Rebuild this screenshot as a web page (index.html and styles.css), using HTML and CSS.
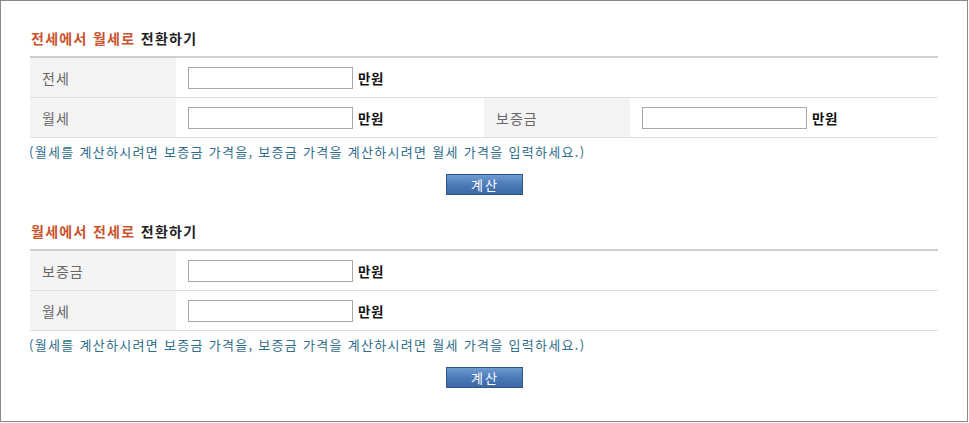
FILE: index.html
```html
<!DOCTYPE html>
<html lang="ko">
<head>
<meta charset="utf-8">
<title>전월세 전환</title>
<link rel="stylesheet" href="styles.css">
</head>
<body>
<div class="frame">
  <section class="calc">
    <h2 class="title"><span class="hl">전세에서 월세로</span> 전환하기</h2>
    <div class="table">
      <div class="row">
        <div class="label">전세</div>
        <div class="value wide"><input class="field" type="text"><span class="unit">만원</span></div>
      </div>
      <div class="row">
        <div class="label">월세</div>
        <div class="value"><input class="field" type="text"><span class="unit">만원</span></div>
        <div class="label">보증금</div>
        <div class="value"><input class="field" type="text"><span class="unit">만원</span></div>
      </div>
    </div>
    <p class="note">(월세를 계산하시려면 보증금 가격을, 보증금 가격을 계산하시려면 월세 가격을 입력하세요.)</p>
    <div class="actions"><button class="btn" type="button">계산</button></div>
  </section>

  <section class="calc second">
    <h2 class="title"><span class="hl">월세에서 전세로</span> 전환하기</h2>
    <div class="table">
      <div class="row">
        <div class="label">보증금</div>
        <div class="value wide"><input class="field" type="text"><span class="unit">만원</span></div>
      </div>
      <div class="row">
        <div class="label">월세</div>
        <div class="value wide"><input class="field" type="text"><span class="unit">만원</span></div>
      </div>
    </div>
    <p class="note">(월세를 계산하시려면 보증금 가격을, 보증금 가격을 계산하시려면 월세 가격을 입력하세요.)</p>
    <div class="actions"><button class="btn" type="button">계산</button></div>
  </section>
</div>
</body>
</html>
```

FILE: styles.css
```css
html, body {
  margin: 0;
  padding: 0;
  background: #fff;
}
body {
  font-family: "Noto Sans CJK KR", "Noto Sans", sans-serif;
}
.frame {
  box-sizing: border-box;
  width: 968px;
  height: 422px;
  border: 1px solid #8a8a8a;
  padding: 27px 0 0 29px;
}
.calc {
  width: 908px;
}
.second {
  margin-top: 26px;
}
.title {
  margin: 0 0 8px 1px;
  font-size: 14px;
  line-height: 20px;
  font-weight: bold;
  color: #222;
  letter-spacing: 1.3px;
}
.hl {
  color: #c8532c;
}
.table {
  border-top: 2px solid #cfcfcf;
}
.row {
  display: grid;
  grid-template-columns: 146px 308px 146px 308px;
  height: 39px;
  border-bottom: 1px solid #dedede;
}
.label {
  display: flex;
  align-items: center;
  padding-left: 12px;
  background: #f4f4f4;
  color: #666;
  font-size: 14px;
  letter-spacing: 1px;
}
.value {
  display: flex;
  align-items: center;
  padding-left: 12px;
}
.wide {
  grid-column: span 3;
}
.field {
  box-sizing: border-box;
  width: 165px;
  height: 22px;
  margin: 0;
  border: 1px solid #a8a8a8;
  background: #fff;
  padding: 0 3px;
}
.unit {
  margin-left: 5px;
  font-size: 13.5px;
  font-weight: bold;
  color: #111;
  letter-spacing: 0.5px;
}
.note {
  margin: 4px 0 0 -1px;
  font-size: 13px;
  line-height: 20px;
  color: #2f6e8c;
  letter-spacing: 1.3px;
}
.actions {
  display: flex;
  justify-content: center;
  margin-top: 12px;
}
.btn {
  box-sizing: border-box;
  width: 77px;
  height: 21px;
  margin: 0;
  padding: 0 0 0 2px;
  border: 1px solid #2f5486;
  background: linear-gradient(#6f9bd1, #4a78b6 55%, #3d69a6);
  color: #fff;
  font-family: "Noto Sans CJK KR", sans-serif;
  font-size: 13px;
  line-height: 19px;
  letter-spacing: 2px;
}
```
